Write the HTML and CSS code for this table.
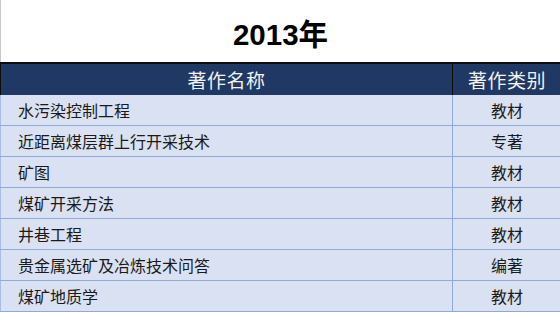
FILE: index.html
```html
<!DOCTYPE html>
<html lang="zh-CN">
<head>
<meta charset="utf-8">
<link rel="stylesheet" href="styles.css">
</head>
<body>
<div class="sheet">
  <div class="title">2013年</div>
  <table class="works">
    <thead>
      <tr><th class="name">著作名称</th><th class="type">著作类别</th></tr>
    </thead>
    <tbody>
      <tr><td class="name">水污染控制工程</td><td class="type">教材</td></tr>
      <tr><td class="name">近距离煤层群上行开采技术</td><td class="type">专著</td></tr>
      <tr><td class="name">矿图</td><td class="type">教材</td></tr>
      <tr><td class="name">煤矿开采方法</td><td class="type">教材</td></tr>
      <tr><td class="name">井巷工程</td><td class="type">教材</td></tr>
      <tr><td class="name">贵金属选矿及冶炼技术问答</td><td class="type">编著</td></tr>
      <tr><td class="name">煤矿地质学</td><td class="type">教材</td></tr>
    </tbody>
  </table>
</div>
</body>
</html>
```
FILE: styles.css
```css
html, body {
  margin: 0;
  padding: 0;
  background: #ffffff;
}
.sheet {
  width: 560px;
  height: 313px;
  overflow: hidden;
  font-family: "Noto Sans CJK SC", "Liberation Sans", sans-serif;
}
.title {
  height: 62px;
  box-sizing: border-box;
  border-left: 1px solid #c8c8c8;
  display: flex;
  align-items: center;
  justify-content: center;
  font-family: "Liberation Sans", "Noto Sans CJK SC", sans-serif;
  font-weight: bold;
  font-size: 29.5px;
  color: #000;
  padding-top: 1px;
}
.works {
  width: 560px;
  border-collapse: collapse;
  table-layout: fixed;
}
.works th, .works td {
  padding: 0;
  margin: 0;
  white-space: nowrap;
}
.works th {
  height: 31px;
  background: #1f3864;
  color: #f2f2f2;
  font-weight: normal;
  font-size: 19px;
  letter-spacing: 0.5px;
  text-align: center;
  border-top: 2px solid #0d0d0d;
  border-left: 1px solid #0d0d0d;
  line-height: 30px;
}
.works td {
  height: 30px;
  background: #d9e1f2;
  color: #1a1a1a;
  font-size: 16px;
  line-height: 30px;
  border-bottom: 1px solid #8eaadb;
  border-left: 1px solid #a8bde2;
}
.works td.name {
  text-align: left;
  padding-left: 17px;
}
.works td.type {
  text-align: center;
  border-left: 1px solid #8eaadb;
}
.works .name { width: 451px; }
.works .type { width: 108px; }
```
